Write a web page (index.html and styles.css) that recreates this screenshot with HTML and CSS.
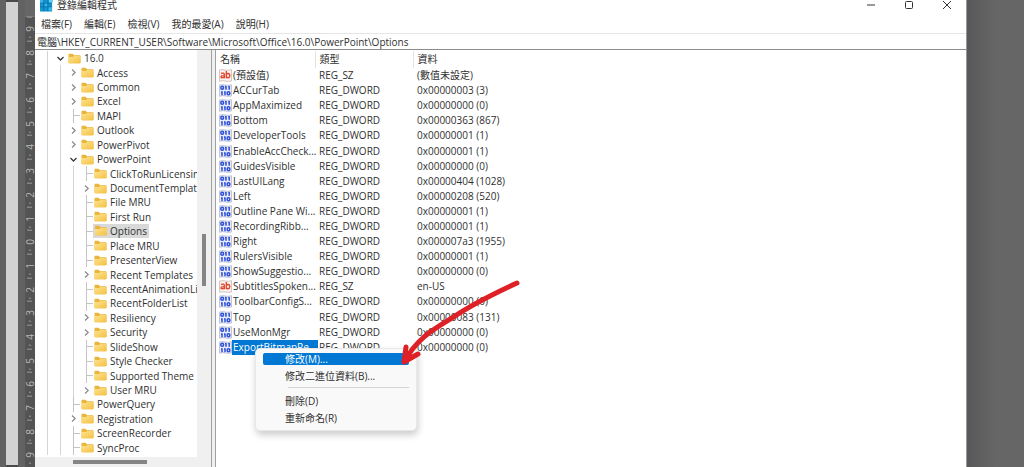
FILE: index.html
```html
<!DOCTYPE html>
<html lang="zh-Hant">
<head>
<meta charset="utf-8">
<title>登錄編輯程式</title>
<link rel="stylesheet" href="styles.css">
</head>
<body>
<svg class="defs" aria-hidden="true">
  <defs>
    <linearGradient id="gold" x1="0" y1="0" x2="1" y2="1"><stop offset="0" stop-color="#ffe391"/><stop offset="1" stop-color="#f3c142"/></linearGradient>
    <symbol id="folder" viewBox="0 0 13 11"><path d="M.5 1.5Q.5.8 1.2.8H4.6L6 2.2H11.8Q12.5 2.2 12.5 3V9.5Q12.5 10.2 11.8 10.2H1.2Q.5 10.2.5 9.5Z" fill="#e9b53a"/><path d="M.5 4H5L6.2 3H12.5V9.5Q12.5 10.2 11.8 10.2H1.2Q.5 10.2.5 9.5Z" fill="url(#gold)"/></symbol>
    <symbol id="right" viewBox="0 0 13 13"><path d="M5 3.5 8.2 6.5 5 9.5" fill="none" stroke="#8a8a8a" stroke-width="1.2"/></symbol>
    <symbol id="down" viewBox="0 0 13 13"><path d="M3.5 5 6.5 8 9.5 5" fill="none" stroke="#3c3c3c" stroke-width="1.3"/></symbol>
    <symbol id="bin" viewBox="0 0 13 13"><path d="M.5 1Q4 .2 6.500 1T12.500 .7V12Q9 12.800 6.500 12T.5 12.300Z" fill="#e6eafa" stroke="#b4bacb" stroke-width=".8"/><g fill="none" stroke="#2f50d6" stroke-width="1.500"><ellipse cx="3.200" cy="3.800" rx="1.400" ry="1.500"/><path d="M7 1.900V5.700M10.200 1.900V5.700M6 2.500H7M9.200 2.500H10.200M3 7.300V11.300M6 7.300V11.300M2 8H3M5 8H6"/><ellipse cx="9.500" cy="9.300" rx="1.400" ry="1.500"/></g></symbol>
    <symbol id="str" viewBox="0 0 13 13"><path d="M.5 1Q4 .2 6.500 1T12.500 .7V12Q9 12.800 6.500 12T.5 12.300Z" fill="#fbf3f1" stroke="#c9b6b4" stroke-width=".8"/><g fill="none" stroke="#e0472c" stroke-width="1.400"><path d="M2 4.500Q5.300 3.300 5.300 5.500V9.200M5.300 6.600Q1.900 6.400 2 8Q2.300 9.600 5.300 8"/><path d="M7.300 2V9.200M7.300 5.500Q8 4.300 9.500 4.500Q10.900 5 10.800 6.700Q10.600 8.800 9 8.800Q7.800 8.700 7.300 8"/></g></symbol>
  </defs>
</svg>

<div class="desktop">
  <div class="strip"></div>
  <div class="page-edge"></div>
  <div class="strip"></div>
  <div class="ruler">
    <span>9</span><span>8</span><span>7</span><span>6</span><span>5</span><span>4</span><span>3</span><span>2</span><span>1</span><span>0</span><span>1</span><span>2</span><span>3</span><span>4</span><span>5</span><span>6</span><span>7</span><span>8</span><span>9</span>
  </div>

  <main class="window">
    <header class="titlebar">
      <svg class="app-icon" viewBox="0 0 14 14" aria-hidden="true"><path d="M0 1H10V4H13V14H0Z" fill="#1294cf"/><path d="M0 1H4V5H0ZM5 5H8V9H5ZM9 9H13V13H9Z" fill="#35b8e8"/><path d="M0 5H13M0 9H13M4 1V14M8.500 1V14" stroke="#0b6fa8" stroke-width=".8"/><path d="M10 0H14V4H10Z" fill="#5fd0f5"/></svg>
      <h1>登錄編輯程式</h1>
      <button aria-label="最小化"><svg viewBox="0 0 10 10"><path d="M1 5H9"/></svg></button>
      <button aria-label="最大化"><svg viewBox="0 0 10 10"><rect x="1.500" y="1.500" width="7" height="7" rx="1"/></svg></button>
      <button aria-label="關閉"><svg viewBox="0 0 10 10"><path d="M1 1 9 9M9 1 1 9"/></svg></button>
    </header>
    <nav class="menubar">
      <button>檔案(F)</button><button>編輯(E)</button><button>檢視(V)</button><button>我的最愛(A)</button><button>說明(H)</button>
    </nav>
    <input class="address" aria-label="路徑" value="電腦\HKEY_CURRENT_USER\Software\Microsoft\Office\16.0\PowerPoint\Options">

    <div class="panes">
      <section class="tree-pane">
        <ul class="tree">
          <li class="l0"><svg class="toggle"><use href="#down"/></svg><svg class="folder"><use href="#folder"/></svg><span>16.0</span></li>
          <li class="l1"><svg class="toggle"><use href="#right"/></svg><svg class="folder"><use href="#folder"/></svg><span>Access</span></li>
          <li class="l1"><svg class="toggle"><use href="#right"/></svg><svg class="folder"><use href="#folder"/></svg><span>Common</span></li>
          <li class="l1"><svg class="toggle"><use href="#right"/></svg><svg class="folder"><use href="#folder"/></svg><span>Excel</span></li>
          <li class="l1"><i class="tee"></i><svg class="folder"><use href="#folder"/></svg><span>MAPI</span></li>
          <li class="l1"><svg class="toggle"><use href="#right"/></svg><svg class="folder"><use href="#folder"/></svg><span>Outlook</span></li>
          <li class="l1"><svg class="toggle"><use href="#right"/></svg><svg class="folder"><use href="#folder"/></svg><span>PowerPivot</span></li>
          <li class="l1"><svg class="toggle"><use href="#down"/></svg><svg class="folder"><use href="#folder"/></svg><span>PowerPoint</span></li>
          <li class="l2"><i class="tee"></i><svg class="folder"><use href="#folder"/></svg><span>ClickToRunLicensing</span></li>
          <li class="l2"><svg class="toggle"><use href="#right"/></svg><svg class="folder"><use href="#folder"/></svg><span>DocumentTemplates</span></li>
          <li class="l2"><i class="tee"></i><svg class="folder"><use href="#folder"/></svg><span>File MRU</span></li>
          <li class="l2"><i class="tee"></i><svg class="folder"><use href="#folder"/></svg><span>First Run</span></li>
          <li class="l2 current"><i class="tee"></i><svg class="folder"><use href="#folder"/></svg><span>Options</span></li>
          <li class="l2"><i class="tee"></i><svg class="folder"><use href="#folder"/></svg><span>Place MRU</span></li>
          <li class="l2"><i class="tee"></i><svg class="folder"><use href="#folder"/></svg><span>PresenterView</span></li>
          <li class="l2"><svg class="toggle"><use href="#right"/></svg><svg class="folder"><use href="#folder"/></svg><span>Recent Templates</span></li>
          <li class="l2"><i class="tee"></i><svg class="folder"><use href="#folder"/></svg><span>RecentAnimationList</span></li>
          <li class="l2"><i class="tee"></i><svg class="folder"><use href="#folder"/></svg><span>RecentFolderList</span></li>
          <li class="l2"><svg class="toggle"><use href="#right"/></svg><svg class="folder"><use href="#folder"/></svg><span>Resiliency</span></li>
          <li class="l2"><svg class="toggle"><use href="#right"/></svg><svg class="folder"><use href="#folder"/></svg><span>Security</span></li>
          <li class="l2"><i class="tee"></i><svg class="folder"><use href="#folder"/></svg><span>SlideShow</span></li>
          <li class="l2"><i class="tee"></i><svg class="folder"><use href="#folder"/></svg><span>Style Checker</span></li>
          <li class="l2"><i class="tee"></i><svg class="folder"><use href="#folder"/></svg><span>Supported Theme</span></li>
          <li class="l2"><svg class="toggle"><use href="#right"/></svg><svg class="folder"><use href="#folder"/></svg><span>User MRU</span></li>
          <li class="l1"><i class="tee"></i><svg class="folder"><use href="#folder"/></svg><span>PowerQuery</span></li>
          <li class="l1"><svg class="toggle"><use href="#right"/></svg><svg class="folder"><use href="#folder"/></svg><span>Registration</span></li>
          <li class="l1"><i class="tee"></i><svg class="folder"><use href="#folder"/></svg><span>ScreenRecorder</span></li>
          <li class="l1"><i class="tee"></i><svg class="folder"><use href="#folder"/></svg><span>SyncProc</span></li>
        </ul>
        <div class="vscroll"><div class="thumb"></div></div>
        <div class="hscroll"><div class="thumb"></div></div>
      </section>

      <section class="values-pane">
        <table>
          <thead><tr><th class="name">名稱</th><th class="type">類型</th><th>資料</th></tr></thead>
          <tbody>
            <tr><td><div><svg><use href="#str"/></svg><span>(預設值)</span></div></td><td>REG_SZ</td><td>(數值未設定)</td></tr>
            <tr><td><div><svg><use href="#bin"/></svg><span>ACCurTab</span></div></td><td>REG_DWORD</td><td>0x00000003 (3)</td></tr>
            <tr><td><div><svg><use href="#bin"/></svg><span>AppMaximized</span></div></td><td>REG_DWORD</td><td>0x00000000 (0)</td></tr>
            <tr><td><div><svg><use href="#bin"/></svg><span>Bottom</span></div></td><td>REG_DWORD</td><td>0x00000363 (867)</td></tr>
            <tr><td><div><svg><use href="#bin"/></svg><span>DeveloperTools</span></div></td><td>REG_DWORD</td><td>0x00000001 (1)</td></tr>
            <tr><td><div><svg><use href="#bin"/></svg><span>EnableAccCheck...</span></div></td><td>REG_DWORD</td><td>0x00000001 (1)</td></tr>
            <tr><td><div><svg><use href="#bin"/></svg><span>GuidesVisible</span></div></td><td>REG_DWORD</td><td>0x00000000 (0)</td></tr>
            <tr><td><div><svg><use href="#bin"/></svg><span>LastUILang</span></div></td><td>REG_DWORD</td><td>0x00000404 (1028)</td></tr>
            <tr><td><div><svg><use href="#bin"/></svg><span>Left</span></div></td><td>REG_DWORD</td><td>0x00000208 (520)</td></tr>
            <tr><td><div><svg><use href="#bin"/></svg><span>Outline Pane Wi...</span></div></td><td>REG_DWORD</td><td>0x00000001 (1)</td></tr>
            <tr><td><div><svg><use href="#bin"/></svg><span>RecordingRibb...</span></div></td><td>REG_DWORD</td><td>0x00000001 (1)</td></tr>
            <tr><td><div><svg><use href="#bin"/></svg><span>Right</span></div></td><td>REG_DWORD</td><td>0x000007a3 (1955)</td></tr>
            <tr><td><div><svg><use href="#bin"/></svg><span>RulersVisible</span></div></td><td>REG_DWORD</td><td>0x00000001 (1)</td></tr>
            <tr><td><div><svg><use href="#bin"/></svg><span>ShowSuggestio...</span></div></td><td>REG_DWORD</td><td>0x00000000 (0)</td></tr>
            <tr><td><div><svg><use href="#str"/></svg><span>SubtitlesSpoken...</span></div></td><td>REG_SZ</td><td>en-US</td></tr>
            <tr><td><div><svg><use href="#bin"/></svg><span>ToolbarConfigS...</span></div></td><td>REG_DWORD</td><td>0x00000000 (0)</td></tr>
            <tr><td><div><svg><use href="#bin"/></svg><span>Top</span></div></td><td>REG_DWORD</td><td>0x00000083 (131)</td></tr>
            <tr><td><div><svg><use href="#bin"/></svg><span>UseMonMgr</span></div></td><td>REG_DWORD</td><td>0x00000000 (0)</td></tr>
            <tr class="selected"><td><div><svg><use href="#bin"/></svg><span>ExportBitmapRe...</span></div></td><td>REG_DWORD</td><td>0x00000000 (0)</td></tr>
          </tbody>
        </table>

        <div class="context-menu">
          <button class="active">修改(M)...</button>
          <button>修改二進位資料(B)...</button>
          <hr>
          <button>刪除(D)</button>
          <button>重新命名(R)</button>
        </div>
        <svg class="arrow" viewBox="0 0 130 100" aria-hidden="true"><path d="M121 8C95 20 75 30 56 43C38 54 20 64 9 86M10 72 8 87 22 79" fill="none" stroke="#de2127" stroke-width="5" stroke-linecap="round" stroke-linejoin="round"/></svg>
      </section>
    </div>
  </main>
  <div class="backdrop"></div>
</div>
</body>
</html>
```

FILE: styles.css
```css
* { box-sizing: border-box; }

body {
  margin: 0;
  background: #666;
  color: #303030;
  font: 10px/15px "Open Sans", "Noto Sans CJK TC", sans-serif;
}

button, input { font: inherit; color: inherit; border: 0; background: none; padding: 0; }

.defs { position: absolute; width: 0; height: 0; }

.desktop {
  display: grid;
  grid-template-columns: 6px 12px 7px 10px 1fr 57px;
  height: 100vh;
  overflow: hidden;
}

.strip { background: #626262; }
.page-edge { background: #d3d3d3; border-top: 2px solid #4a4a4a; border-bottom: 2px solid #4a4a4a; }
.backdrop { background: linear-gradient(90deg, #58585a, #666 28px); }

.ruler {
  display: flex;
  flex-direction: column;
  margin-top: 16px;
  border-top: 1px solid #777;
  background: #545454;
  color: #b8b8b8;
}
.ruler span {
  flex: 1;
  display: flex;
  align-items: center;
  justify-content: center;
  writing-mode: vertical-rl;
  transform: rotate(180deg);
  font-size: 10px;
  line-height: 10px;
}
.ruler span::before, .ruler span::after { content: ""; flex: 1; width: 5px; }
.ruler span::before { background: linear-gradient(#999, #999) center 3px / 2px 1px no-repeat; }
.ruler span::after { background: linear-gradient(#999, #999) center bottom / 5px 1px no-repeat; }

.window {
  display: flex;
  flex-direction: column;
  min-width: 0;
  background: #fff;
  border-right: 1px solid #999;
}

.titlebar { display: flex; align-items: center; height: 15px; padding-left: 5px; }
.titlebar h1 { flex: 1; margin: 0 0 6px 4px; font-size: 10px; font-weight: 400; line-height: 10px; }
.app-icon { width: 13px; height: 14px; margin-bottom: 5px; }
.titlebar button { display: flex; justify-content: center; width: 38px; margin-bottom: 6px; }
.titlebar button svg { width: 10px; height: 10px; fill: none; stroke: #333; }

.menubar { display: flex; gap: 12px; height: 18px; padding: 1px 6px 0; }
.menubar button { line-height: 17px; }

.address { height: 17px; padding: 0 2px; border-top: 1px solid #e6e6e6; border-bottom: 1px solid #8c8c8c; outline: 0; }

.panes { display: flex; flex: 1; min-height: 0; }

.tree-pane {
  display: grid;
  grid-template: minmax(0, 1fr) 10px / minmax(0, 1fr) 14px;
  flex: none;
  width: 177px;
  border-right: 1px solid #a0a0a0;
}
.tree {
  display: grid;
  grid-auto-rows: minmax(0, 1fr);
  margin: 0;
  padding: 1px 0 2px 6px;
  list-style: none;
  overflow: hidden;
}
.tree li {
  display: flex;
  align-items: center;
  min-width: 0;
  white-space: nowrap;
  background-image: repeating-linear-gradient(90deg, transparent 0 6px, #d4d4d4 6px 7px, transparent 7px 13px);
  background-repeat: no-repeat;
}
.l0 { padding-left: 13px; background-size: 13px 100%; }
.l1 { padding-left: 26px; background-size: 26px 100%; }
.l2 { padding-left: 39px; background-size: 39px 100%; }
.tree .tee {
  flex: none;
  align-self: stretch;
  width: 13px;
  background: linear-gradient(#c4c4c4, #c4c4c4) 6px 0 / 1px 100% no-repeat, linear-gradient(#c4c4c4, #c4c4c4) 6px 50% / 7px 1px no-repeat;
}
.toggle { flex: none; width: 13px; height: 13px; }
.folder { flex: none; width: 13px; height: 11px; margin: 0 1px; }
.tree span { padding: 0 2px; line-height: 14px; }
.current .folder { height: 14px; margin: 0; padding: 1px 0 2px 1px; width: 15px; background: #d9d9d9; }
.current span { background: #d9d9d9; }

.vscroll, .hscroll { display: flex; background: #f0f0f0; }
.vscroll { justify-content: center; padding-top: 184px; }
.vscroll .thumb { width: 4px; height: 52px; background: #858585; }
.hscroll { grid-column: 1 / -1; align-items: center; padding-left: 38px; }
.hscroll .thumb { width: 74px; height: 4px; background: #858585; }

.values-pane { position: relative; flex: 1; min-width: 0; margin-left: 3px; padding-top: 1px; border-left: 1px solid #a0a0a0; box-shadow: -3px 0 #f0f0f0; }
table { width: 100%; height: 304px; table-layout: fixed; border-collapse: collapse; }
th, td { padding: 0 0 0 4px; text-align: left; font-weight: 400; white-space: nowrap; line-height: 15px; }
th { height: 17px; border-right: 1px solid #e4e4e4; }
th:last-child { border: 0; }
.name { width: 99px; }
.type { width: 98px; }
td:first-child { padding-left: 3px; }
td div { display: flex; align-items: center; }
td svg { flex: none; width: 13px; height: 13px; }
td span { padding: 0 1px; }
.selected span { background: #0078d4; color: #fff; }

.context-menu {
  position: absolute;
  left: 39px;
  top: 298px;
  display: flex;
  flex-direction: column;
  width: 162px;
  padding: 4px 7px;
  border: 1px solid #e8e8e8;
  border-radius: 5px;
  background: #f9f9f9;
  box-shadow: 1px 4px 7px #0003;
}
.context-menu button { height: 17px; padding-left: 22px; border-radius: 2px; text-align: left; line-height: 12px; }
.context-menu .active { height: 12px; margin-bottom: 2px; background: #0078d4; color: #fff; }
.context-menu hr { width: 121px; margin: 3px 0 4px auto; border: 0; border-top: 1px solid #d4d4d4; }

.arrow { position: absolute; left: 180px; top: 225px; width: 130px; height: 100px; }
```
